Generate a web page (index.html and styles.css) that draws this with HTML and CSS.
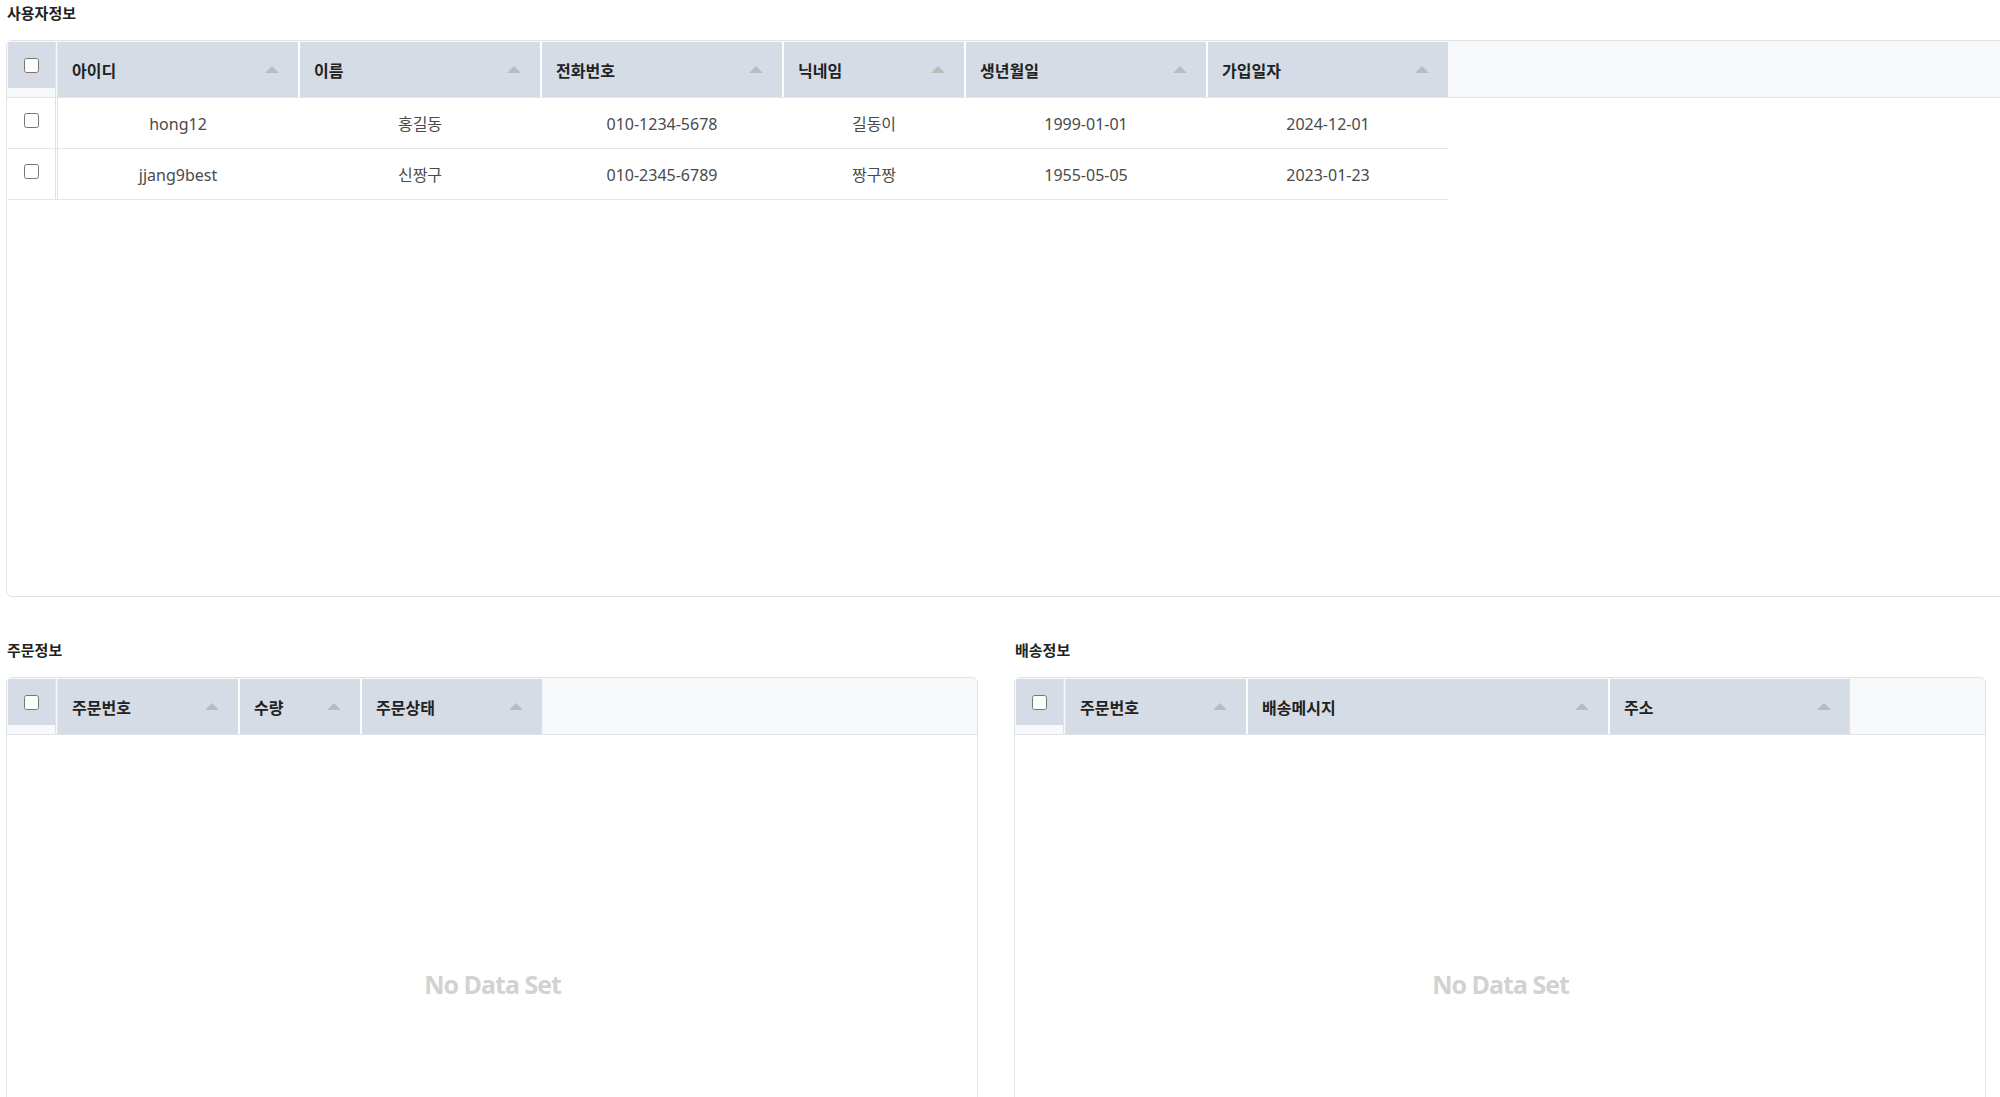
FILE: index.html
```html
<!DOCTYPE html>
<html lang="ko">
<head>
    <meta charset="UTF-8">
    <meta name="viewport" content="width=device-width, initial-scale=1.0">
    <title>사용자정보</title>
    <link rel="stylesheet" href="styles.css">
</head>
<body>
    <div class="page">
        <!-- 사용자정보 -->
        <section class="panel">
            <h2 class="panel-title">사용자정보</h2>
            <div class="grid grid-wide">
                <div class="grid-head">
                    <div class="col-check"><div class="check-cell"><input type="checkbox"></div></div>
                    <div class="th w-240">아이디<span class="sort"></span></div>
                    <div class="th w-240">이름<span class="sort"></span></div>
                    <div class="th w-240">전화번호<span class="sort"></span></div>
                    <div class="th w-180">닉네임<span class="sort"></span></div>
                    <div class="th w-240">생년월일<span class="sort"></span></div>
                    <div class="th w-240">가입일자<span class="sort"></span></div>
                </div>
                <div class="grid-body">
                    <div class="row">
                        <div class="col-check"><input type="checkbox"></div>
                        <div class="td w-240">hong12</div>
                        <div class="td w-240">홍길동</div>
                        <div class="td w-240">010-1234-5678</div>
                        <div class="td w-180">길동이</div>
                        <div class="td w-240">1999-01-01</div>
                        <div class="td w-240">2024-12-01</div>
                    </div>
                    <div class="row">
                        <div class="col-check"><input type="checkbox"></div>
                        <div class="td w-240">jjang9best</div>
                        <div class="td w-240">신짱구</div>
                        <div class="td w-240">010-2345-6789</div>
                        <div class="td w-180">짱구짱</div>
                        <div class="td w-240">1955-05-05</div>
                        <div class="td w-240">2023-01-23</div>
                    </div>
                </div>
            </div>
        </section>

        <div class="panel-row">
            <!-- 주문정보 -->
            <section class="panel">
                <h2 class="panel-title">주문정보</h2>
                <div class="grid">
                    <div class="grid-head">
                        <div class="col-check"><div class="check-cell"><input type="checkbox"></div></div>
                        <div class="th w-180">주문번호<span class="sort"></span></div>
                        <div class="th w-120">수량<span class="sort"></span></div>
                        <div class="th w-180">주문상태<span class="sort"></span></div>
                    </div>
                    <div class="grid-body">
                        <div class="empty">No Data Set</div>
                    </div>
                </div>
            </section>

            <!-- 배송정보 -->
            <section class="panel">
                <h2 class="panel-title">배송정보</h2>
                <div class="grid">
                    <div class="grid-head">
                        <div class="col-check"><div class="check-cell"><input type="checkbox"></div></div>
                        <div class="th w-180">주문번호<span class="sort"></span></div>
                        <div class="th w-360">배송메시지<span class="sort"></span></div>
                        <div class="th w-240">주소<span class="sort"></span></div>
                    </div>
                    <div class="grid-body">
                        <div class="empty">No Data Set</div>
                    </div>
                </div>
            </section>
        </div>
    </div>
</body>
</html>
```

FILE: styles.css
```css
/* Reset */
* {
    box-sizing: border-box;
}

body, h2 {
    margin: 0;
    padding: 0;
}

body {
    font-family: "Noto Sans", "Noto Sans CJK KR", sans-serif;
    background-color: #fff;
    color: #333;
    overflow: hidden;
}

.page {
    padding: 3px 14px 0 6px;
}

/* Panel */
.panel-title {
    font-size: 15px;
    line-height: 20px;
    font-weight: 700;
    color: #222;
    margin-bottom: 17px;
    padding-left: 1px;
}

.panel-row {
    display: grid;
    grid-template-columns: 1fr 1fr;
    column-gap: 36px;
    margin-top: 43px;
}

/* Grid */
.grid {
    height: 557px;
    border: 1px solid #e1e2e4;
    border-radius: 6px;
    display: flex;
    flex-direction: column;
    overflow: hidden;
}

.grid-wide {
    margin-right: -40px;
}

.grid-head {
    display: flex;
    height: 57px;
    padding: 1px 0 0 1px;
    background-color: #f7f8fa;
    border-bottom: 1px solid #e2e4e8;
    flex-shrink: 0;
}

.grid-body {
    flex: 1;
    display: flex;
    flex-direction: column;
    padding-left: 1px;
}

.col-check {
    width: 50px;
    flex-shrink: 0;
    border-right: 3px double #dfe1e4;
}

.check-cell {
    height: 46px;
    background-color: #d6dce5;
    display: flex;
    align-items: center;
    justify-content: center;
}

input[type="checkbox"] {
    width: 15px;
    height: 15px;
    margin: 0;
}

.w-120 { width: 120px; }
.w-180 { width: 180px; }
.w-240 { width: 240px; }
.w-360 { width: 360px; }

.th {
    flex-shrink: 0;
    height: 55px;
    display: flex;
    align-items: center;
    justify-content: space-between;
    padding: 0 19px 0 14px;
    background-color: #d6dce5;
    font-size: 16px;
    font-weight: 700;
    color: #222;
}

/* white divider between header cells */
.th + .th {
    margin-left: 2px;
    box-shadow: -2px 0 0 #fff;
}

.sort {
    width: 0;
    height: 0;
    border-left: 7px solid transparent;
    border-right: 7px solid transparent;
    border-bottom: 7px solid #bcbcbc;
}

/* Rows */
.row {
    display: flex;
    height: 51px;
    align-self: flex-start;
    border-bottom: 1px solid #e4e4e4;
}

.row .col-check {
    display: flex;
    justify-content: center;
    padding-top: 15px;
}

.td {
    flex-shrink: 0;
    padding-top: 1px;
    line-height: 50px;
    text-align: center;
    font-size: 16px;
    color: #4a4a4a;
}

.td + .td {
    margin-left: 2px;
}

/* Empty state */
.empty {
    flex: 1;
    display: flex;
    align-items: center;
    justify-content: center;
    font-family: "Open Sans", "Noto Sans", sans-serif;
    font-size: 25px;
    font-weight: 700;
    color: #d2d2d2;
    letter-spacing: -1px;
}
```
